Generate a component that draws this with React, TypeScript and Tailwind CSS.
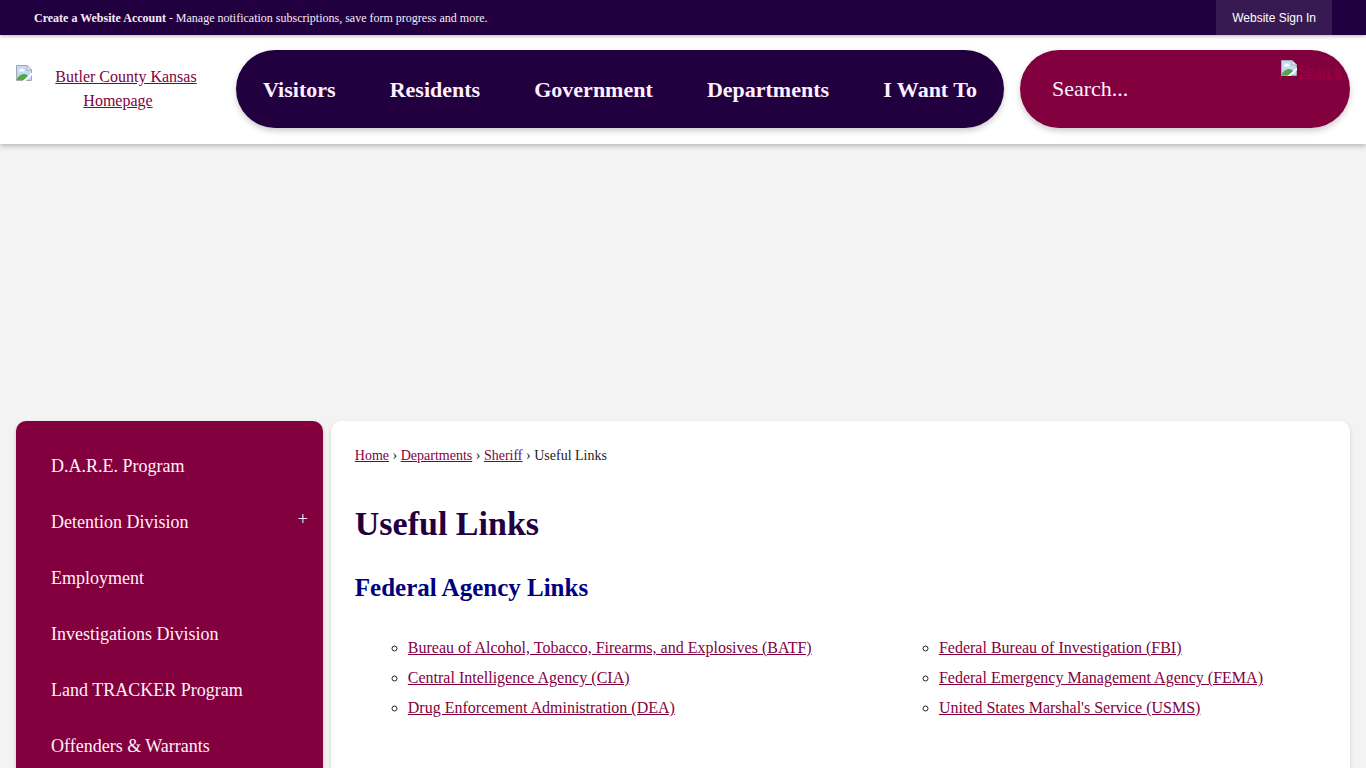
const navItems = ['Visitors', 'Residents', 'Government', 'Departments', 'I Want To']

const sideItems = [
  { label: 'D.A.R.E. Program' },
  { label: 'Detention Division', expandable: true },
  { label: 'Employment' },
  { label: 'Investigations Division' },
  { label: 'Land TRACKER Program' },
  { label: 'Offenders & Warrants' },
]

const breadcrumbs = ['Home', 'Departments', 'Sheriff']

const linkColumns = [
  [
    'Bureau of Alcohol, Tobacco, Firearms, and Explosives (BATF)',
    'Central Intelligence Agency (CIA)',
    'Drug Enforcement Administration (DEA)',
  ],
  [
    'Federal Bureau of Investigation (FBI)',
    'Federal Emergency Management Agency (FEMA)',
    "United States Marshal's Service (USMS)",
  ],
]

function MissingImage({ className = '' }: { className?: string }) {
  return (
    <svg width="16" height="16" viewBox="0 0 16 16" className={className} aria-hidden="true">
      <path d="M0.5 0.5H11L15.5 5V15.5H0.5Z" fill="#c3d9f7" stroke="#a5a9ad" />
      <path d="M3 6.5a1.6 1.6 0 0 1 1.5-2 2 2 0 0 1 3.6 0.6 1.2 1.2 0 0 1 0.4 1.4Z" fill="#fff" />
      <path d="M1 15V13.5C3 10.5 5.5 9 8 9s4 1.5 5 3L10 15Z" fill="#4fa84a" />
      <path d="M16 7.5V10L9.5 16H6.5Z" fill="#fff" />
      <path d="M11 0.5V5H15.5Z" fill="#fff" stroke="#a5a9ad" />
    </svg>
  )
}

function TopBar() {
  return (
    <div className="relative z-10 flex h-[35px] items-center justify-between bg-[#22003f] px-[34px] text-xs text-[#f8ecfa] shadow-[0_1px_4px_rgba(0,0,0,0.3)]">
      <p>
        <a href="#" className="font-bold">
          Create a Website Account
        </a>{' '}
        - Manage notification subscriptions, save form progress and more.
      </p>
      <a
        href="#"
        className="flex h-full items-center bg-[#381a53] px-4 font-['Liberation_Sans',Arial,sans-serif] font-medium text-white"
      >
        Website Sign In
      </a>
    </div>
  )
}

function Header() {
  return (
    <header className="flex gap-4 bg-white px-4 pt-[15px] pb-4 shadow-[0_2px_5px_rgba(0,0,0,0.25)]">
      <a href="#" className="block w-[204px] pt-[15px] text-center leading-6 text-[#83003f] underline">
        <MissingImage className="float-left" />
        Butler County Kansas Homepage
      </a>

      <nav
        aria-label="Main"
        className="flex-1 rounded-full bg-[#22003f] shadow-[0_3px_6px_rgba(0,0,0,0.2)]"
      >
        <ul className="flex h-full items-center pt-0.5">
          {navItems.map((item) => (
            <li key={item} className="flex-auto text-center">
              <a href="#" className="text-[22px] leading-7 font-bold text-[#fdf0ff]">
                {item}
              </a>
            </li>
          ))}
        </ul>
      </nav>

      <form
        role="search"
        className="flex h-[78px] w-[330px] overflow-hidden rounded-full bg-[#83003f] shadow-[0_3px_6px_rgba(0,0,0,0.2)]"
      >
        <input
          type="text"
          aria-label="Search"
          placeholder="Search..."
          className="min-w-0 flex-1 bg-transparent pb-0.5 pl-8 text-[22px] text-white outline-none placeholder:text-[#fdf0ff]"
        />
        <button type="button" className="flex items-start gap-px pt-2.5 pr-2 text-[#9a0045] underline">
          <MissingImage className="shrink-0" />
          <span className="leading-6">Search</span>
        </button>
      </form>
    </header>
  )
}

function Sidebar() {
  return (
    <aside className="w-[23%] rounded-t-[10px] bg-[#83003f] pt-[17px] shadow-[0_2px_4px_rgba(0,0,0,0.2)]">
      <ul>
        {sideItems.map((item) => (
          <li
            key={item.label}
            className="flex h-14 items-center justify-between pr-[15px] pl-[35px] text-lg text-[#fff0f8]"
          >
            <a href="#">{item.label}</a>
            {item.expandable && (
              <button type="button" aria-label={`Expand ${item.label}`} className="pb-1.5">
                +
              </button>
            )}
          </li>
        ))}
      </ul>
    </aside>
  )
}

function Content() {
  return (
    <main className="flex-1 rounded-t-[10px] bg-white px-6 pt-[25px] shadow-[0_2px_4px_rgba(0,0,0,0.15)]">
      <nav aria-label="Breadcrumb" className="text-sm">
        {breadcrumbs.map((crumb) => (
          <span key={crumb}>
            <a href="#" className="text-[#83003f] underline">
              {crumb}
            </a>
            {' › '}
          </span>
        ))}
        <span>Useful Links</span>
      </nav>

      <h1 className="mt-9 text-[34px] leading-11 font-bold text-[#22003f]">Useful Links</h1>
      <h2 className="mt-6 text-[25px] leading-9 font-bold text-[#000080]">Federal Agency Links</h2>

      <div className="mt-[30px] grid grid-cols-[531fr_440fr]">
        {linkColumns.map((links, i) => (
          <ul key={i} className="list-[circle] pl-[53px]">
            {links.map((link) => (
              <li key={link} className="pb-1.5 leading-6">
                <a href="#" className="text-[#83003f] underline">
                  {link}
                </a>
              </li>
            ))}
          </ul>
        ))}
      </div>
    </main>
  )
}

export default function App() {
  return (
    <div className="flex min-h-screen flex-col bg-[#f3f3f3] font-['Liberation_Serif','Times_New_Roman',serif] text-base text-[#222]">
      <TopBar />
      <Header />
      <div className="flex flex-1 gap-2 px-4 pt-[277px]">
        <Sidebar />
        <Content />
      </div>
    </div>
  )
}
